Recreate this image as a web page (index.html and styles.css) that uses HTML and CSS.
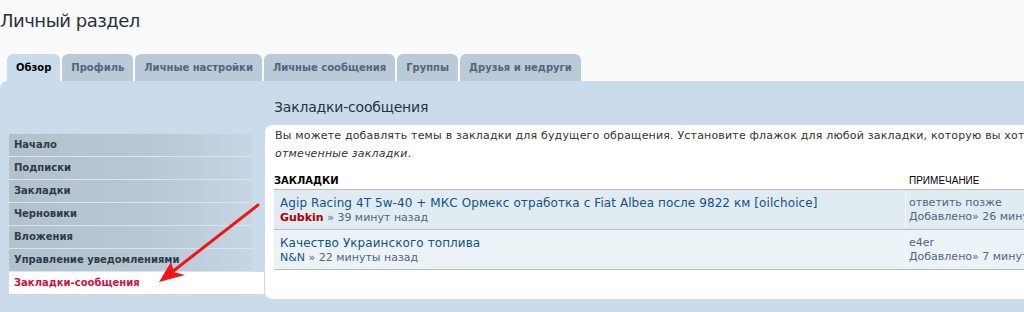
FILE: index.html
```html
<!DOCTYPE html>
<html>
<head>
    <title>Личный раздел</title>
    <meta charset="utf-8">
    <link rel="stylesheet" href="styles.css">
</head>
<body>
    <h1 class="page-title">Личный раздел</h1>

    <ul class="tabs">
        <li class="tab active"><a href="#">Обзор</a></li>
        <li class="tab"><a href="#">Профиль</a></li>
        <li class="tab"><a href="#">Личные настройки</a></li>
        <li class="tab"><a href="#">Личные сообщения</a></li>
        <li class="tab"><a href="#">Группы</a></li>
        <li class="tab"><a href="#">Друзья и недруги</a></li>
    </ul>

    <div class="panel">
        <ul class="side-menu">
            <li><a href="#">Начало</a></li>
            <li><a href="#">Подписки</a></li>
            <li><a href="#">Закладки</a></li>
            <li><a href="#">Черновики</a></li>
            <li><a href="#">Вложения</a></li>
            <li><a href="#">Управление уведомлениями</a></li>
            <li class="active"><a href="#">Закладки-сообщения</a></li>
        </ul>

        <div class="main">
            <h2>Закладки-сообщения</h2>
            <div class="inner">
                <p class="intro">Вы можете добавлять темы в закладки для будущего обращения. Установите флажок для любой закладки, которую вы хотите удалить, затем нажмите кнопку <em>Удалить</em><br><em>отмеченные закладки</em>.</p>

                <div class="list-head">
                    <div class="col-topic">Закладки</div>
                    <div class="col-note">Примечание</div>
                </div>

                <div class="row bg1">
                    <div class="col-topic">
                        <a href="#" class="topic-title">Agip Racing 4T 5w-40 + МКС Ормекс отработка с Fiat Albea после 9822 км [oilchoice]</a>
                        <div class="meta"><a href="#" class="user admin">Gubkin</a> » 39 минут назад</div>
                    </div>
                    <div class="col-note">
                        <div>ответить позже</div>
                        <div>Добавлено» 26 минут назад</div>
                    </div>
                </div>

                <div class="row bg2">
                    <div class="col-topic">
                        <a href="#" class="topic-title">Качество Украинского топлива</a>
                        <div class="meta"><a href="#" class="user">N&amp;N</a> » 22 минуты назад</div>
                    </div>
                    <div class="col-note">
                        <div>e4er</div>
                        <div>Добавлено» 7 минут назад</div>
                    </div>
                </div>
            </div>
        </div>
    </div>

    <!-- red annotation arrow drawn over the screenshot -->
    <svg class="arrow" width="1024" height="312" viewBox="0 0 1024 312">
        <line x1="258" y1="205" x2="172" y2="272" stroke="#f21414" stroke-width="3" stroke-linecap="round"/>
        <polygon points="159,282 171,262 174,272 185,275" fill="#f21414"/>
    </svg>
</body>
</html>
```

FILE: styles.css
```css
body {
    margin: 0;
    background-color: #fafafa;
    font-family: 'DejaVu Sans', Verdana, sans-serif;
    color: #333;
    overflow: hidden;
}

.page-title {
    margin: 0;
    padding: 9px 0 0 0;
    font-size: 18px;
    font-weight: normal;
    letter-spacing: -0.5px;
    line-height: 24px;
    color: #28313f;
}

.tabs {
    list-style: none;
    margin: 21px 0 0 0;
    padding: 0 0 0 7px;
    display: flex;
    gap: 2px;
    height: 27px;
}

.tab a {
    display: block;
    padding: 0 9px;
    line-height: 27px;
    background-color: #bbcad7;
    border-radius: 6px 6px 0 0;
    font-size: 10px;
    font-weight: bold;
    color: #536482;
    text-decoration: none;
}

.tab.active a {
    background-color: #cadceb;
    color: #000;
}

.panel {
    display: flex;
    background-color: #cadceb;
    border-radius: 7px 0 0 0;
    height: 240px;
}

.side-menu {
    list-style: none;
    width: 255px;
    margin: 53px 0 0 9px;
    padding: 0;
    flex-shrink: 0;
}

.side-menu li a {
    display: block;
    height: 22px;
    line-height: 22px;
    margin-right: 12px;
    padding-left: 5px;
    border-bottom: 1px solid #d9e4ed;
    background: linear-gradient(to right, #b2c1ce, #b8c8d5 60%, #c6d6e4);
    font-size: 10px;
    font-weight: bold;
    color: #2f3a46;
    text-decoration: none;
}

.side-menu li.active a {
    margin-right: 0;
    background: #fff;
    border-bottom: none;
    color: #d31141;
}

.main {
    width: 1100px;
    flex-shrink: 0;
    margin-left: 1px;
}

.main h2 {
    margin: 0 0 8px 0;
    padding: 16px 0 0 9px;
    font-size: 14px;
    font-weight: normal;
    letter-spacing: -0.2px;
    line-height: 20px;
    color: #28313f;
}

.inner {
    background-color: #fff;
    border-radius: 7px 0 0 7px;
    padding: 2px 0 29px 9px;
}

.intro {
    margin: 0;
    padding-left: 1px;
    font-size: 11px;
    letter-spacing: 0.18px;
    line-height: 18px;
    color: #333;
    white-space: nowrap;
}

.list-head {
    display: flex;
    margin-top: 10px;
    line-height: 16px;
    font-size: 10px;
    text-transform: uppercase;
    border-bottom: 1px solid #b0bcc7;
    color: #000;
}

.list-head .col-topic {
    font-weight: bold;
}

.list-head .col-note {
    font-family: 'Liberation Sans', Arial, sans-serif;
    padding-left: 4px;
}

.col-topic {
    width: 631px;
    flex-shrink: 0;
}

.row {
    display: flex;
    height: 39px;
    border-bottom: 1px solid #b4c1cc;
}

.row.bg1 {
    background-color: #e1ebf2;
}

.row.bg2 {
    background-color: #ecf3f7;
}

.row .col-topic {
    padding: 6px 0 0 6px;
    width: 625px;
}

.topic-title {
    display: block;
    font-size: 12px;
    letter-spacing: 0.08px;
    line-height: 15px;
    color: #105289;
    text-decoration: none;
}

.meta {
    font-size: 11px;
    line-height: 14px;
    color: #536482;
}

.user {
    color: #105289;
    text-decoration: none;
}

.user.admin {
    color: #aa0000;
    font-weight: bold;
}

.row .col-note {
    margin: 3px 0 1px 0;
    padding: 3px 0 0 3px;
    border-left: 1px solid #f6f9fb;
    font-size: 11px;
    line-height: 14px;
    color: #536482;
    white-space: nowrap;
}

.arrow {
    position: absolute;
    left: 0;
    top: 0;
    pointer-events: none;
}
```
